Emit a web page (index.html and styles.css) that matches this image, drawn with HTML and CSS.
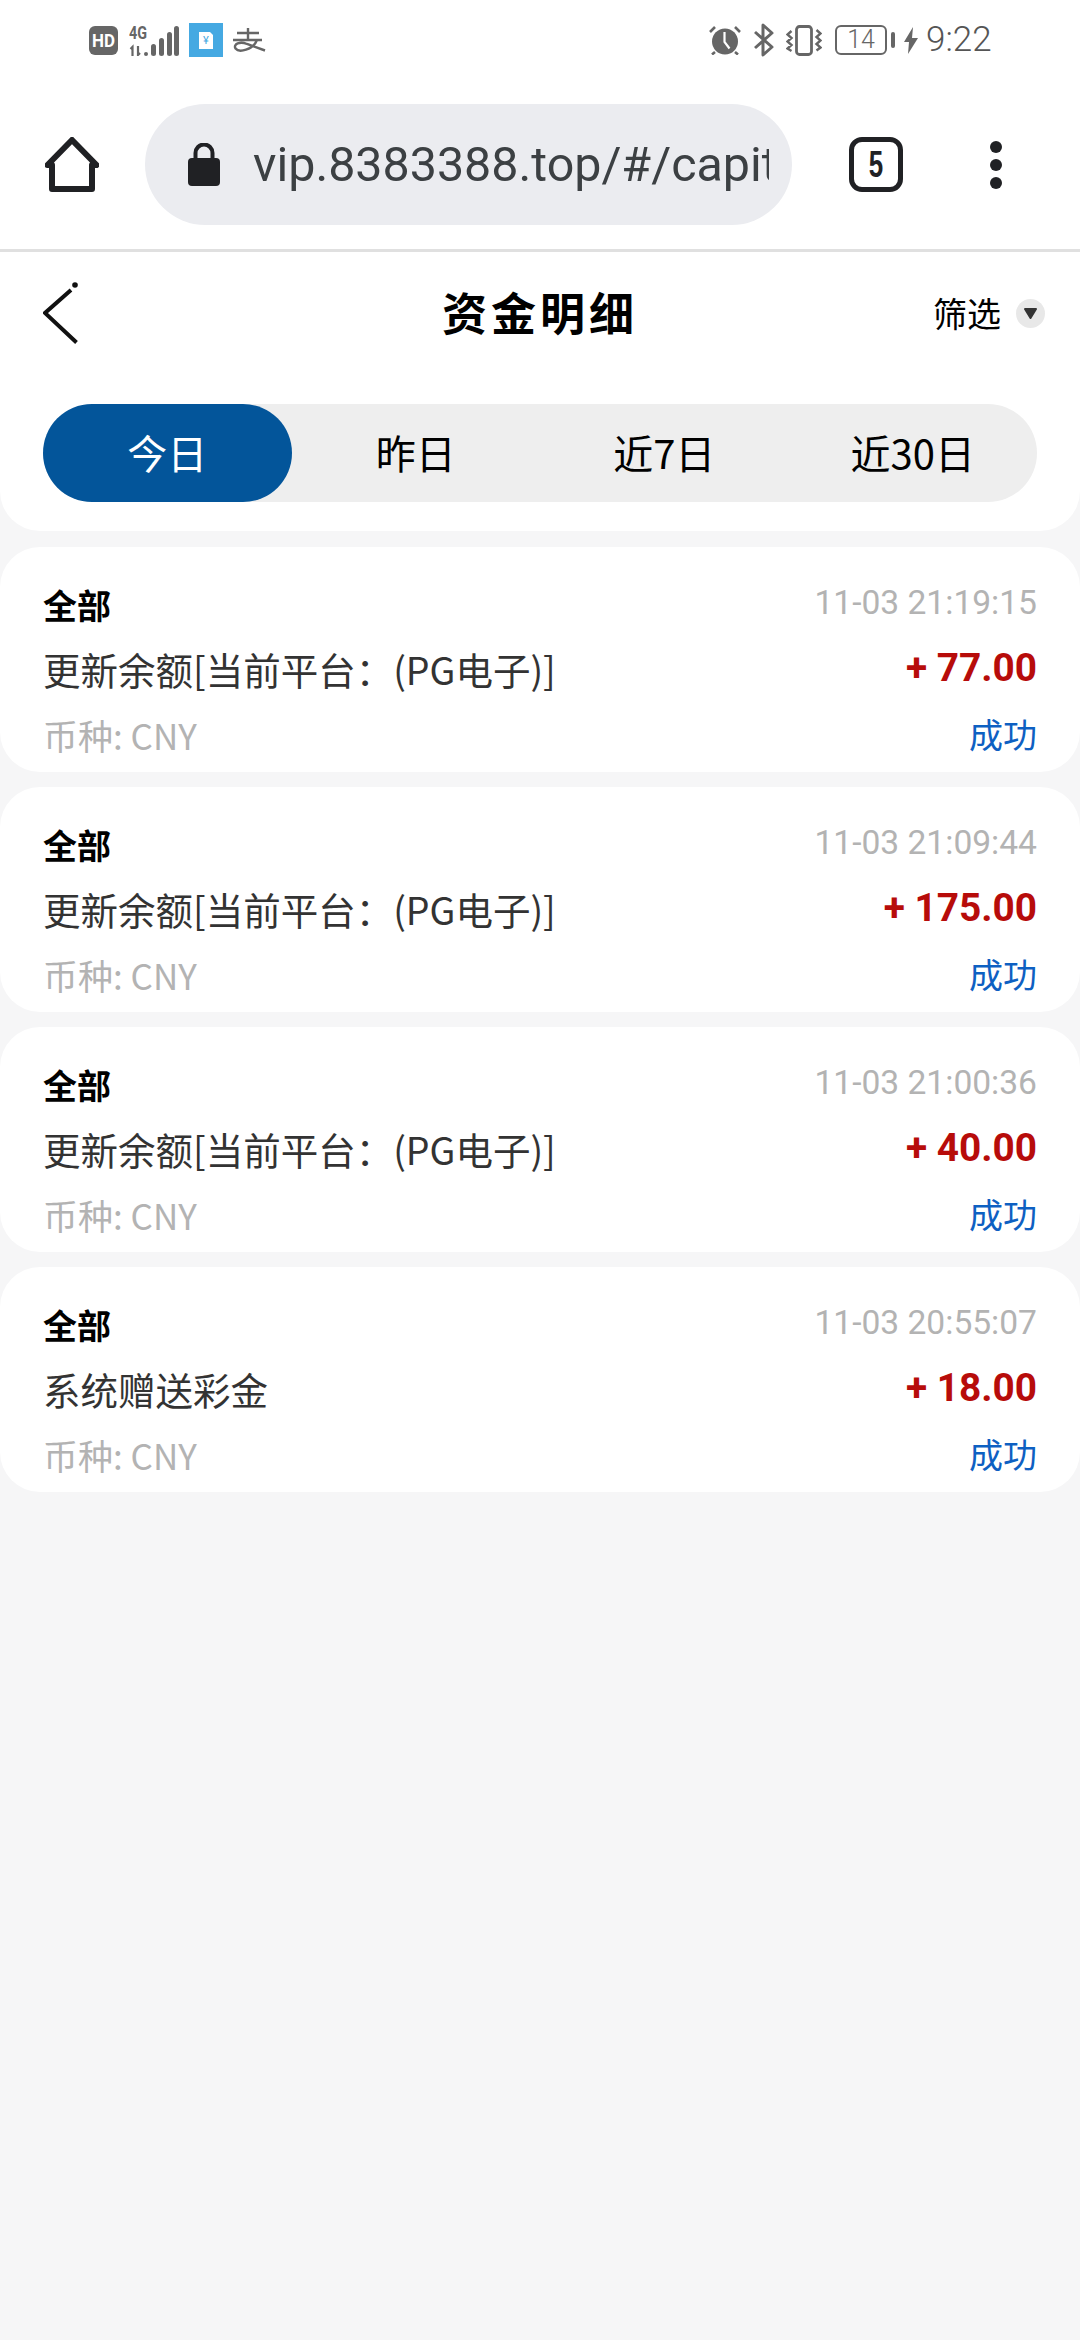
FILE: index.html
```html
<!DOCTYPE html>
<html lang="zh">
<head>
<meta charset="utf-8">
<title>资金明细</title>
<link rel="stylesheet" href="styles.css">
</head>
<body>
<div class="statusbar">
  <div class="status-left">
    <svg class="i-hd" viewBox="0 0 29 29"><rect width="29" height="29" rx="6" fill="#666"/><text x="14.5" y="20.500" text-anchor="middle" textLength="23" lengthAdjust="spacingAndGlyphs" class="hd-text">HD</text></svg>
    <svg class="i-signal" viewBox="0 0 50 31"><text x="0" y="14" textLength="18" lengthAdjust="spacingAndGlyphs" class="net-text">4G</text><path d="M3.500 31V22l-2 2M9 21v9l2-2" stroke="#666" stroke-width="2.200" fill="none"/><rect x="15" y="27" width="4" height="4" rx="2" fill="#666"/><rect x="22" y="19" width="5" height="12" rx="2.500" fill="#666"/><rect x="30" y="13" width="5" height="18" rx="2.500" fill="#666"/><rect x="38" y="7" width="5" height="24" rx="2.500" fill="#666"/><rect x="45" y="1" width="5" height="30" rx="2.500" fill="#666"/></svg>
    <svg class="i-pay" viewBox="0 0 34 34"><rect width="34" height="34" fill="#45a9e2"/><path d="M10 9h11l3 3v14H10z" fill="#fff"/><text x="17" y="21" text-anchor="middle" class="yen">¥</text></svg>
    <svg class="i-zhi" viewBox="0 0 33 24"><path d="M4 5h22M15 0v12M0 12h29M24 12C20 22 6 25 2.500 20.500 0 16 7 13 14 16l18 6.500" stroke="#666" stroke-width="2.400" fill="none"/></svg>
  </div>
  <div class="status-right">
    <svg class="i-alarm" viewBox="0 0 32 30"><circle cx="16" cy="16.500" r="13" fill="#666"/><path d="M15.500 7v10l5 6.500" stroke="#fff" stroke-width="2.200" fill="none"/><path d="M1 7 6 2M31 7l-5-5M6 27l-3 2.500M26 27l3 2.500" stroke="#666" stroke-width="2.600" fill="none"/></svg>
    <svg class="i-bt" viewBox="0 0 21 34"><path d="M2 9 19 24 10 32V2l9 8L2 25" stroke="#666" stroke-width="3" fill="none" stroke-linejoin="round"/></svg>
    <svg class="i-vib" viewBox="0 0 36 31"><rect x="10.500" y="1.500" width="15" height="28" rx="3" stroke="#666" stroke-width="2.800" fill="none"/><path d="M5.500 6 1.500 9.500l4 3.500-4 3.500 4 3.500-4 3.500 4 2.500M30.500 5l4 3.500-4 3.500 4 3.500-4 3.500 4 3.500-4 3" stroke="#666" stroke-width="2.400" fill="none"/></svg>
    <div class="battery"><span class="battery-box">14</span><span class="battery-nub"></span></div>
    <svg class="i-bolt" viewBox="0 0 14 27"><path d="M9 0 0 15h5L4 27l10-16H8z" fill="#666"/></svg>
    <span class="clock">9:22</span>
  </div>
</div>

<div class="toolbar">
  <svg class="i-home" viewBox="0 0 54 55"><path d="M7 52V28H2.500L27 3l24.500 25H47v24z" stroke="#202124" stroke-width="6" fill="none" stroke-linejoin="round"/></svg>
  <div class="omnibox">
    <svg class="i-lock" viewBox="0 0 32 43"><path d="M7.500 17V10a8.500 8.500 0 0 1 17 0v7" stroke="#202124" stroke-width="4" fill="none"/><rect y="15" width="32" height="28" rx="4" fill="#202124"/></svg>
    <div class="url">vip.8383388.top/#/capit</div>
  </div>
  <div class="tab-count"><span class="tab-num">5</span></div>
  <div class="menu-dots"><span></span><span></span><span></span></div>
</div>

<div class="page-head">
  <div class="nav">
    <svg class="i-back" viewBox="0 0 36 62"><path d="M28 8 2 31 33.500 60.500" stroke="#111" stroke-width="4" fill="none"/><circle cx="32" cy="3" r="2.800" fill="#111"/></svg>
    <h1 class="title">资金明细</h1>
    <div class="filter">
      <span>筛选</span>
      <span class="filter-caret"><svg viewBox="0 0 15 13"><path d="M2 2h11L7.500 11z" fill="#333" stroke="#333" stroke-width="2" stroke-linejoin="round"/></svg></span>
    </div>
  </div>
  <div class="tabs">
    <div class="tab active">今日</div>
    <div class="tab">昨日</div>
    <div class="tab">近7日</div>
    <div class="tab">近30日</div>
  </div>
</div>

<div class="list">
  <div class="card">
    <div class="col col-left">
      <div class="kind">全部</div>
      <div class="desc">更新余额[当前平台：(PG电子)]</div>
      <div class="currency">币种: CNY</div>
    </div>
    <div class="col col-right">
      <div class="time">11-03 21:19:15</div>
      <div class="amount">+ 77.00</div>
      <div class="state">成功</div>
    </div>
  </div>
  <div class="card">
    <div class="col col-left">
      <div class="kind">全部</div>
      <div class="desc">更新余额[当前平台：(PG电子)]</div>
      <div class="currency">币种: CNY</div>
    </div>
    <div class="col col-right">
      <div class="time">11-03 21:09:44</div>
      <div class="amount">+ 175.00</div>
      <div class="state">成功</div>
    </div>
  </div>
  <div class="card">
    <div class="col col-left">
      <div class="kind">全部</div>
      <div class="desc">更新余额[当前平台：(PG电子)]</div>
      <div class="currency">币种: CNY</div>
    </div>
    <div class="col col-right">
      <div class="time">11-03 21:00:36</div>
      <div class="amount">+ 40.00</div>
      <div class="state">成功</div>
    </div>
  </div>
  <div class="card">
    <div class="col col-left">
      <div class="kind">全部</div>
      <div class="desc">系统赠送彩金</div>
      <div class="currency">币种: CNY</div>
    </div>
    <div class="col col-right">
      <div class="time">11-03 20:55:07</div>
      <div class="amount">+ 18.00</div>
      <div class="state">成功</div>
    </div>
  </div>
</div>
</body>
</html>
```
FILE: styles.css
```css
* { box-sizing: border-box; margin: 0; padding: 0; }
html, body { height: 100%; }
body {
  background: #f6f6f7;
  font-family: "Noto Sans CJK SC", Roboto, sans-serif;
  color: #000;
  overflow: hidden;
}
svg { display: block; flex: none; }

/* Status bar */
.statusbar {
  height: 80px;
  background: #fff;
  display: flex;
  justify-content: space-between;
  align-items: center;
  padding: 0 92px 0 89px;
}
.status-left, .status-right { display: flex; align-items: center; }
.i-hd { width: 29px; height: 29px; margin-right: 11px; }
.hd-text { font: 700 18px Roboto, sans-serif; fill: #fff; }
.i-signal { width: 50px; height: 31px; margin-right: 10px; }
.net-text { font: 700 19px Roboto, sans-serif; fill: #666; }
.i-pay { width: 34px; height: 34px; margin-right: 10px; }
.yen { font: 400 11px Roboto, sans-serif; fill: #45a9e2; }
.i-zhi { width: 33px; height: 24px; }
.i-alarm { width: 32px; height: 30px; margin-right: 12px; }
.i-bt { width: 21px; height: 34px; margin-right: 12px; }
.i-vib { width: 36px; height: 31px; margin-right: 13px; }
.battery { display: flex; align-items: center; margin-right: 9px; }
.battery-box {
  width: 52px;
  height: 30px;
  border: 2px solid #666;
  border-radius: 6px;
  font: 300 25px/26px Roboto, sans-serif;
  color: #666;
  text-align: center;
}
.battery-nub { width: 4px; height: 16px; background: #666; border-radius: 2px; margin-left: 4px; }
.i-bolt { width: 14px; height: 27px; margin-right: 8px; }
.clock { font: 300 35px/40px Roboto, sans-serif; color: #555; width: 62px; white-space: nowrap; }

/* Browser toolbar */
.toolbar {
  height: 172px;
  background: #fff;
  border-bottom: 3px solid #e0e0e0;
  display: flex;
  align-items: center;
  padding: 0 0 0 45px;
}
.i-home { width: 54px; height: 55px; margin-right: 46px; }
.omnibox {
  width: 647px;
  height: 121px;
  border-radius: 60.5px;
  background: #ebecf0;
  display: flex;
  align-items: center;
  padding: 0 23px 0 43px;
  margin-right: 57px;
}
.i-lock { width: 32px; height: 43px; margin-right: 33px; }
.url {
  flex: 1;
  overflow: hidden;
  white-space: nowrap;
  font: 400 48.4px/60px Roboto, sans-serif;
  color: #3c4043;
}
.tab-count {
  width: 54px;
  height: 55px;
  border: 5.5px solid #202124;
  border-radius: 13px;
  display: flex;
  align-items: center;
  justify-content: center;
  color: #202124;
  margin-right: 87px;
}
.tab-num {
  font: 700 36px/44px "Liberation Sans", sans-serif;
  transform: scaleX(0.72);
}
.menu-dots { display: flex; flex-direction: column; gap: 6px; }
.menu-dots span { width: 12px; height: 12px; border-radius: 50%; background: #202124; }

/* Page heading with period tabs */
.page-head {
  background: #fff;
  border-radius: 0 0 40px 40px;
  padding: 0 43px 29px;
}
.nav {
  height: 152px;
  padding-bottom: 30px;
  display: grid;
  grid-template-columns: 1fr auto 1fr;
  align-items: center;
}
.i-back { width: 36px; height: 62px; }
.title { font-size: 45px; font-weight: 700; letter-spacing: 4px; line-height: 58px; padding-bottom: 2px; }
.filter {
  justify-self: end;
  margin-right: -8px;
  display: flex;
  align-items: center;
  gap: 15px;
  font-size: 34px;
  line-height: 44px;
}
.filter-caret {
  width: 29px;
  height: 29px;
  border-radius: 50%;
  background: #e8e8e8;
  display: flex;
  align-items: center;
  justify-content: center;
}
.filter-caret svg { width: 15px; height: 13px; }
.tabs {
  height: 98px;
  border-radius: 49px;
  background: #eee;
  display: grid;
  grid-template-columns: repeat(4, 1fr);
}
.tab {
  display: flex;
  align-items: center;
  justify-content: center;
  border-radius: 49px;
  font-size: 40px;
  padding-bottom: 2px;
}
.tab.active { background: #03559a; color: #fff; }

/* Transaction list */
.list {
  padding-top: 16px;
  display: flex;
  flex-direction: column;
  gap: 15px;
}
.card {
  height: 225px;
  background: #fff;
  border-radius: 40px;
  padding: 0 43px;
  display: flex;
  justify-content: space-between;
}
.col { display: flex; flex-direction: column; }
.col-left { padding-top: 25px; }
.col-right { padding-top: 23px; align-items: flex-end; }
.kind { height: 64px; line-height: 65px; font-size: 34px; font-weight: 700; }
.desc { height: 66px; line-height: 65px; font-size: 37.5px; color: #333; }
.currency { height: 65px; line-height: 65px; font-size: 35px; color: #b3b3b3; }
.time { height: 65px; font: 400 33.6px/65px Roboto, sans-serif; color: #b3b3b3; }
.amount { height: 66px; font: 700 38.8px/66px Roboto, sans-serif; color: #b70c0a; }
.state { height: 65px; line-height: 65px; font-size: 34px; color: #0e60c2; }
```
